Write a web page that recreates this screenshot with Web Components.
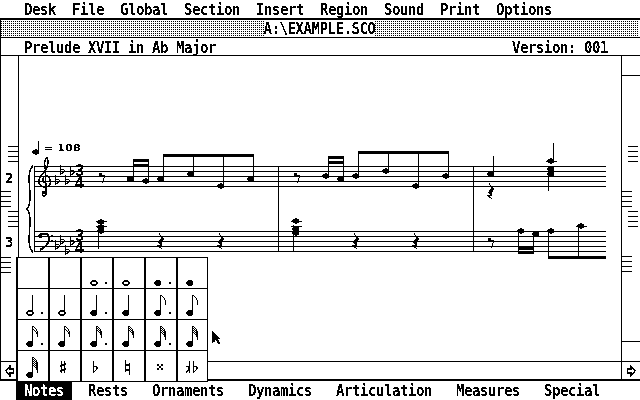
<!DOCTYPE html>
<html>
<head>
<meta charset="utf-8">
<title>A:\EXAMPLE.SCO</title>
<style>
  html, body { margin: 0; padding: 0; background: #fff; }
</style>
</head>
<body>
<st-desktop>
  <menu-bar>
    <menu-item>Desk</menu-item><menu-item>File</menu-item><menu-item>Global</menu-item><menu-item>Section</menu-item><menu-item>Insert</menu-item><menu-item>Region</menu-item><menu-item>Sound</menu-item><menu-item>Print</menu-item><menu-item>Options</menu-item>
  </menu-bar>
  <score-window>
    <title-bar>A:\EXAMPLE.SCO</title-bar>
    <info-bar>
      <span slot="name">Prelude XVII in Ab Major</span>
      <span slot="version">Version: 001</span>
    </info-bar>
    <score-pane>
      <page-ruler side="left"></page-ruler>
      <score-canvas></score-canvas>
      <page-ruler side="right"></page-ruler>
    </score-pane>
    <h-scroll></h-scroll>
  </score-window>
  <tab-bar>
    <tab-item selected>Notes</tab-item><tab-item>Rests</tab-item><tab-item>Ornaments</tab-item><tab-item>Dynamics</tab-item><tab-item>Articulation</tab-item><tab-item>Measures</tab-item><tab-item>Special</tab-item>
  </tab-bar>
  <note-palette>
    <palette-cell></palette-cell><palette-cell></palette-cell>
    <palette-cell head="open" dot></palette-cell><palette-cell head="open"></palette-cell>
    <palette-cell head="filled" dot></palette-cell><palette-cell head="filled"></palette-cell>

    <palette-cell head="open" stem dot></palette-cell><palette-cell head="open" stem></palette-cell>
    <palette-cell head="filled" stem dot></palette-cell><palette-cell head="filled" stem></palette-cell>
    <palette-cell head="filled" stem flags="1" dot></palette-cell><palette-cell head="filled" stem flags="1"></palette-cell>

    <palette-cell head="filled" stem flags="2" dot></palette-cell><palette-cell head="filled" stem flags="2"></palette-cell>
    <palette-cell head="filled" stem flags="3" dot></palette-cell><palette-cell head="filled" stem flags="3"></palette-cell>
    <palette-cell head="filled" stem flags="4" dot></palette-cell><palette-cell head="filled" stem flags="4"></palette-cell>

    <palette-cell head="filled" stem flags="5"></palette-cell><palette-cell accidental="sharp"></palette-cell>
    <palette-cell accidental="flat"></palette-cell><palette-cell accidental="natural"></palette-cell>
    <palette-cell accidental="double-sharp"></palette-cell><palette-cell accidental="double-flat"></palette-cell>
  </note-palette>
  <mouse-cursor></mouse-cursor>
</st-desktop>

<script>
const SYSTEM_FONT = '"DejaVu Sans Mono", "Liberation Mono", monospace'
// 14px mono is close to 8px per cell, the Y stretch gives the tall look of the 8x16 system font
const SYSTEM_TEXT = 'letter-spacing: -0.43px; transform: scaleY(1.12);'

const rect = (x, y, w, h) => `<rect x="${x}" y="${y}" width="${w}" height="${h}"/>`
const head = (x, y) => `<ellipse cx="${x}" cy="${y}" rx="3.6" ry="2.6"/>`
const stroke = (d, w = 1) => `<path d="${d}" fill="none" stroke="#000" stroke-width="${w}"/>`

/**
 * Desktop: the 640x400 screen. Holds the 1-bit threshold filter for everything inside.
 */
class StDesktop extends HTMLElement {
  constructor () {
    super()
    this.attachShadow({ mode: 'open' })
  }

  connectedCallback () {
    this.shadowRoot.innerHTML = `
      <style>
        :host {
          display: block;
          width: 640px;
          height: 400px;
          overflow: hidden;
          color: #000;
          font-family: ${SYSTEM_FONT};
          font-size: 14px;
          font-weight: bold;
        }
        .screen {
          position: relative;
          display: flex;
          flex-direction: column;
          height: 400px;
          background: #fff;
          filter: url(#mono);
        }
        svg.defs { position: absolute; width: 0; height: 0; }
      </style>
      <svg class="defs" aria-hidden="true">
        <filter id="mono" x="0" y="0" width="100%" height="100%" color-interpolation-filters="sRGB">
          <feColorMatrix type="saturate" values="0"/>
          <feComponentTransfer>
            <feFuncR type="discrete" tableValues="0 1"/>
            <feFuncG type="discrete" tableValues="0 1"/>
            <feFuncB type="discrete" tableValues="0 1"/>
          </feComponentTransfer>
        </filter>
      </svg>
      <div class="screen"><slot></slot></div>
    `
  }
}

/**
 * Top menu bar, its titles are slotted menu-item elements.
 */
class MenuBar extends HTMLElement {
  constructor () {
    super()
    this.attachShadow({ mode: 'open' })
    this.shadowRoot.innerHTML = `
      <style>
        :host {
          display: flex;
          gap: 16px;
          height: 18px;
          padding-left: 24px;
          border-bottom: 2px solid #000;
        }
      </style>
      <slot></slot>
    `
  }
}

class MenuItem extends HTMLElement {
  constructor () {
    super()
    this.attachShadow({ mode: 'open' })
    this.shadowRoot.innerHTML = `
      <style>
        :host { display: block; line-height: 18px; width: max-content; ${SYSTEM_TEXT} }
      </style>
      <slot></slot>
    `
  }
}

/**
 * The GEM window frame: left border, thick bottom border.
 */
class ScoreWindow extends HTMLElement {
  constructor () {
    super()
    this.attachShadow({ mode: 'open' })
    this.shadowRoot.innerHTML = `
      <style>
        :host {
          display: flex;
          flex-direction: column;
          border-left: 1px solid #000;
          border-bottom: 2px solid #000;
        }
      </style>
      <slot></slot>
    `
  }
}

class TitleBar extends HTMLElement {
  constructor () {
    super()
    this.attachShadow({ mode: 'open' })
    this.shadowRoot.innerHTML = `
      <style>
        :host {
          display: flex;
          justify-content: center;
          height: 16px;
          padding: 1px 1px 0 0;
          border-bottom: 1px solid #000;
          background-image: url("data:image/svg+xml,%3Csvg xmlns='http://www.w3.org/2000/svg' width='2' height='2' shape-rendering='crispEdges'%3E%3Crect width='1' height='1'/%3E%3C/svg%3E");
          background-origin: content-box;
          background-clip: content-box;
        }
        .label {
          display: block;
          margin: -1px 0 0 -1px;
          height: 17px;
          background: #fff;
        }
        .text {
          display: block;
          line-height: 17px;
          ${SYSTEM_TEXT}
        }
      </style>
      <span class="label"><span class="text"><slot></slot></span></span>
    `
  }
}

class InfoBar extends HTMLElement {
  constructor () {
    super()
    this.attachShadow({ mode: 'open' })
    this.shadowRoot.innerHTML = `
      <style>
        :host {
          display: flex;
          justify-content: space-between;
          height: 17px;
          padding: 0 32px 0 23px;
          border-bottom: 1px solid #000;
          line-height: 18px;
        }
        div { ${SYSTEM_TEXT} }
      </style>
      <div><slot name="name"></slot></div>
      <div><slot name="version"></slot></div>
    `
  }
}

class ScorePane extends HTMLElement {
  constructor () {
    super()
    this.attachShadow({ mode: 'open' })
    this.shadowRoot.innerHTML = `
      <style>
        :host { display: flex; height: 305px; }
        ::slotted(score-canvas) { flex: 1; }
      </style>
      <slot></slot>
    `
  }
}

/**
 * The ruler strips beside the score. Short dashes mark the staves of each line of the page.
 */
class PageRuler extends HTMLElement {
  constructor () {
    super()
    this.attachShadow({ mode: 'open' })
  }

  connectedCallback () {
    const left = this.getAttribute('side') === 'left'
    const near = left ? 1 : 622
    const far = left ? 8 : 628
    const groups = left
      ? [[far, 146], [near, 191], [far, 211], [near, 257]]
      : [[far, 146], [near, 191], [far, 211], [near, 256]]
    const dashes = groups.map(([x, top]) =>
      [0, 5, 10, 15].map(i => rect(x, top + i, 10, 1)).join('')).join('')
    const extra = left
      ? `<text x="5" y="183">2</text><text x="5" y="247">3</text>`
      : rect(622, 75, 18, 1) + rect(622, 341, 18, 1)

    this.shadowRoot.innerHTML = `
      <style>
        :host {
          display: block;
          flex: none;
          width: ${left ? 17 : 18}px;
          ${left ? 'border-right' : 'border-left'}: 1px solid #000;
        }
        svg { display: block; }
        text { font: bold 14px ${SYSTEM_FONT}; }
      </style>
      <svg width="${left ? 17 : 18}" height="305" viewBox="${near} 56 ${left ? 17 : 18} 305" shape-rendering="crispEdges">
        ${dashes}${extra}
      </svg>
    `
  }
}

/**
 * The score itself, drawn on a free canvas. The viewBox keeps screen coordinates.
 */
class ScoreCanvas extends HTMLElement {
  constructor () {
    super()
    this.attachShadow({ mode: 'open' })
  }

  connectedCallback () {
    this.shadowRoot.innerHTML = `
      <style>
        :host { display: block; height: 305px; overflow: hidden; }
        svg { display: block; }
        .tempo { font: bold 8px "DejaVu Sans", sans-serif; }
        .time {
          font: bold 16px "Liberation Sans", sans-serif;
          writing-mode: vertical-rl;
          text-orientation: upright;
          letter-spacing: -5.4px;
        }
      </style>
      <svg width="602" height="305" viewBox="19 56 602 305" shape-rendering="crispEdges">
        ${this.staves()}
        ${this.clefs()}
        ${this.tempo()}
        ${this.topStaff()}
        ${this.bottomStaff()}
      </svg>
    `
  }

  staves () {
    let out = ''
    for (const top of [166, 231]) {
      for (let i = 0; i < 5; i++) out += rect(35, top + i * 5, 571, 1)
    }
    out += rect(34, 166, 1, 86) + rect(278, 166, 1, 86) + rect(473, 166, 1, 86)
    out += stroke('M33 166 C28 170 29 180 30 195 C30 203 29 207 27 209 C29 211 30 215 30 223 C29 238 28 248 33 252', 1.6)
    return out
  }

  flat (x, top) {
    return rect(x, top, 1, 10) + stroke(`M${x} ${top + 5} q5 -2 4 1.5 l-4 3.5`, 1.2)
  }

  rest4 (x, y) {
    return stroke(`M${x - 2} ${y} L${x + 1} ${y + 5}`) +
      `<path d="M${x + 1} ${y + 3} L${x + 3} ${y + 6} L${x} ${y + 12} L${x - 3} ${y + 10} Z"/>` +
      `<path d="M${x + 1} ${y + 11} L${x + 1} ${y + 13} L${x - 1} ${y + 13} L${x + 1} ${y + 16} L${x - 3} ${y + 14} L${x - 4} ${y + 12} Z"/>`
  }

  rest8 (x, y) {
    return rect(x - 3, y, 3, 3) + stroke(`M${x} ${y + 2} L${x + 3} ${y + 3} L${x} ${y + 10}`)
  }

  clefs () {
    const time = (y) => `<text class="time" x="79.500" y="${y}">34</text>`
    return stroke('M44 192 a2 2 0 1 0 2 1 L45.500 170 C44 163 45 159 47 158 C49 161 48 168 44 172 C40 176 38 179 39 183 C40 187 46 188 49 186 C52 182 50 176 46 176 C43 176 42 180 44 183', 1.5) +
      rect(42, 191, 3, 3) +
      stroke('M39 236 C42 232 49 233 49 238 C49 244 44 248 40 250', 2) +
      rect(39, 235, 3, 3) + rect(51, 235, 2, 2) + rect(51, 240, 2, 2) +
      [[55, 175], [60, 165], [65, 175], [70, 166], [55, 240], [60, 235], [65, 245], [70, 236]]
        .map(([x, y]) => this.flat(x, y)).join('') +
      time(162) + time(227)
  }

  tempo () {
    return head(36, 152) + rect(38, 141, 1, 11) +
      `<text class="tempo" transform="translate(44 151) scale(1.4 1)">= 108</text>`
  }

  topStaff () {
    return this.rest8(102, 173) +
      [[130.5, 179], [146, 181], [161, 179], [191, 174], [221, 186], [251, 179]].map(([x, y]) => head(x, y)).join('') +
      rect(133, 159, 1, 20) + rect(148, 159, 1, 22) + rect(163, 154, 1, 25) +
      rect(193, 154, 1, 20) + rect(223, 154, 1, 32) + rect(253, 154, 1, 25) +
      rect(133, 159, 16, 3) + rect(133, 164, 16, 3) + rect(163, 154, 91, 3) +
      this.rest8(297, 173) +
      [[326, 176], [341, 179], [356, 176], [386, 171], [416, 186], [446, 176]].map(([x, y]) => head(x, y)).join('') +
      rect(328, 156, 1, 20) + rect(343, 156, 1, 23) + rect(358, 151, 1, 25) +
      rect(388, 151, 1, 20) + rect(418, 151, 1, 35) + rect(448, 151, 1, 25) +
      rect(328, 156, 16, 3) + rect(328, 161, 16, 3) + rect(358, 151, 91, 3) +
      head(491, 174) + rect(493, 156, 1, 18) + this.rest4(491, 183) +
      head(551, 161) + rect(546, 161, 11, 1) + rect(553, 143, 1, 18) +
      head(551, 169) + head(551, 174) + rect(548, 170, 1, 21)
  }

  bottomStaff () {
    return head(101, 222) + head(101, 227) + head(101, 231) +
      rect(96, 221, 11, 1) + rect(96, 226, 11, 1) + rect(98, 225, 1, 24) +
      this.rest4(161, 233) + this.rest4(221, 233) +
      head(296, 221) + head(296, 229) + head(296, 233) +
      rect(291, 221, 11, 1) + rect(291, 226, 11, 1) + rect(293, 225, 1, 26) +
      this.rest4(356, 233) + this.rest4(416, 233) +
      this.rest8(491, 238) +
      head(521, 231) + head(536, 234) + head(551, 231) + head(581, 226) + rect(576, 226, 11, 1) +
      rect(518, 231, 1, 23) + rect(533, 234, 1, 20) + rect(548, 231, 1, 28) + rect(578, 226, 1, 33) +
      rect(518, 247, 16, 3) + rect(518, 251, 16, 3) + rect(548, 256, 58, 3)
  }
}

/**
 * Horizontal scroll bar with its two hollow arrow boxes.
 */
class HScroll extends HTMLElement {
  constructor () {
    super()
    this.attachShadow({ mode: 'open' })
    this.shadowRoot.innerHTML = `
      <style>
        :host {
          display: flex;
          justify-content: space-between;
          height: 17px;
          border-top: 1px solid #000;
        }
        .arrow {
          display: flex;
          align-items: center;
          justify-content: center;
          width: 18px;
        }
        .arrow.right { border-left: 1px solid #000; }
      </style>
      <div class="arrow left">
        <svg width="10" height="12" viewBox="0 0 10 12"><path d="M1 6 L5 1 V4 H8.500 V8 H5 V11 Z" fill="#fff" stroke="#000" stroke-width="1.4"/></svg>
      </div>
      <div class="arrow right">
        <svg width="10" height="12" viewBox="0 0 10 12"><path d="M9 6 L5 1 V4 H1.500 V8 H5 V11 Z" fill="#fff" stroke="#000" stroke-width="1.4"/></svg>
      </div>
    `
  }
}

class TabBar extends HTMLElement {
  constructor () {
    super()
    this.attachShadow({ mode: 'open' })
    this.shadowRoot.innerHTML = `
      <style>
        :host {
          display: flex;
          gap: 8px;
          height: 19px;
          padding-left: 16px;
        }
      </style>
      <slot></slot>
    `
  }
}

class TabItem extends HTMLElement {
  constructor () {
    super()
    this.attachShadow({ mode: 'open' })
    this.shadowRoot.innerHTML = `
      <style>
        :host {
          display: block;
          padding: 0 8px;
          line-height: 19px;
        }
        :host([selected]) { background: #000; color: #fff; }
        span { display: block; ${SYSTEM_TEXT} }
      </style>
      <span><slot></slot></span>
    `
  }
}

/**
 * The note palette floating over the score, six columns by four rows.
 */
class NotePalette extends HTMLElement {
  constructor () {
    super()
    this.attachShadow({ mode: 'open' })
    this.shadowRoot.innerHTML = `
      <style>
        :host {
          position: absolute;
          left: 16px;
          top: 257px;
          display: grid;
          grid-template-columns: repeat(5, 30px) 29px;
          grid-auto-rows: 30px;
          gap: 1px 2px;
          padding: 1px 1px 1px 2px;
          background: #000;
        }
      </style>
      <slot></slot>
    `
  }
}

/**
 * One palette entry: a note built from head, stem, flags and dot, or an accidental.
 */
class PaletteCell extends HTMLElement {
  constructor () {
    super()
    this.attachShadow({ mode: 'open' })
  }

  connectedCallback () {
    this.shadowRoot.innerHTML = `
      <style>
        :host { display: block; background: #fff; overflow: hidden; }
        svg { display: block; }
      </style>
      <svg width="30" height="30" viewBox="0 0 30 30" shape-rendering="crispEdges">${this.glyph()}</svg>
    `
  }

  glyph () {
    const accidental = this.getAttribute('accidental')
    if (accidental) return this.accidental(accidental)
    const kind = this.getAttribute('head')
    if (!kind) return ''
    const stem = this.hasAttribute('stem')
    const cy = stem ? 24 : 25
    const dotted = this.hasAttribute('dot')
    const flags = Number(this.getAttribute('flags') || 0)
    let out = kind === 'open'
      ? `<ellipse cx="12" cy="${cy}" rx="3.2" ry="2.2" fill="#fff" stroke="#000" stroke-width="1.2" shape-rendering="auto"/>`
      : `<ellipse cx="12" cy="${cy}" rx="3.6" ry="2.7"/>`
    if (stem) out += rect(14, 6, 1, cy - 6)
    for (let i = 0; i < flags; i++) {
      const y = 6 + i * (flags > 2 ? 2 : 3)
      out += stroke(`M15 ${y} q3 3 5 6 l-1 ${flags === 1 ? 4 : 2}`)
    }
    if (dotted) out += rect(23, cy - 1, 2, 2)
    return out
  }

  accidental (name) {
    switch (name) {
      case 'sharp':
        return rect(11, 10, 1, 12) + rect(14, 10, 1, 12) +
          `<path d="M10 14 L16 12 V14 L10 16 Z M10 19 L16 17 V19 L10 21 Z"/>`
      case 'flat':
        return rect(11, 10, 1, 12) + stroke('M11 16 q5 -2 4 2 l-4 4', 1.2)
      case 'natural':
        return rect(11, 9, 1, 11) + rect(15, 12, 1, 12) +
          `<path d="M11 14 L16 12 V14 L11 16 Z M11 19 L16 17 V19 L11 21 Z"/>`
      case 'double-sharp':
        return rect(11, 13, 2, 2) + rect(15, 13, 2, 2) + rect(13, 15, 2, 2) + rect(11, 17, 2, 2) + rect(15, 17, 2, 2)
      default:
        return rect(11, 10, 1, 12) + rect(15, 10, 1, 12) +
          stroke('M8 16 q3 -1 3 2 l-3 4', 1.2) + stroke('M15 16 q5 -2 4 2 l-4 4', 1.2)
    }
  }
}

class MouseCursor extends HTMLElement {
  constructor () {
    super()
    this.attachShadow({ mode: 'open' })
    this.shadowRoot.innerHTML = `
      <style>
        :host { position: absolute; left: 212px; top: 330px; display: block; width: 10px; height: 15px; }
        svg { display: block; }
      </style>
      <svg width="10" height="15" viewBox="0 0 10 15"><path d="M0 0 L9 9 H6 L8.500 13.500 L6.500 14.500 L4 10 L1.500 12.500 H0 Z"/></svg>
    `
  }
}

customElements.define('st-desktop', StDesktop)
customElements.define('menu-bar', MenuBar)
customElements.define('menu-item', MenuItem)
customElements.define('score-window', ScoreWindow)
customElements.define('title-bar', TitleBar)
customElements.define('info-bar', InfoBar)
customElements.define('score-pane', ScorePane)
customElements.define('page-ruler', PageRuler)
customElements.define('score-canvas', ScoreCanvas)
customElements.define('h-scroll', HScroll)
customElements.define('tab-bar', TabBar)
customElements.define('tab-item', TabItem)
customElements.define('note-palette', NotePalette)
customElements.define('palette-cell', PaletteCell)
customElements.define('mouse-cursor', MouseCursor)
</script>
</body>
</html>
